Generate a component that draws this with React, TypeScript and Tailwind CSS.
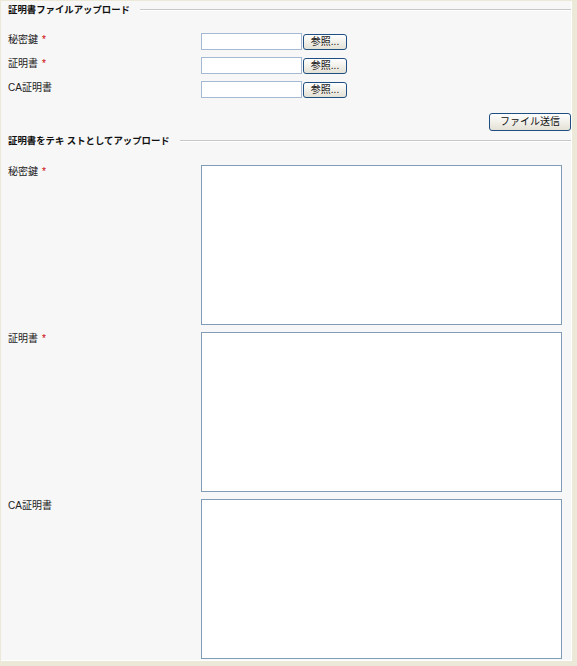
import React from "react";

const font = { fontFamily: '"Liberation Sans", "Noto Sans CJK JP", sans-serif' };

const SectionHeading = ({ title }: { title: string }) => (
  <div className="flex items-center h-[14px]">
    <span className="text-[9.4px] font-bold text-[#111] leading-[14px] whitespace-pre">{title}</span>
    <div className="flex-1 ml-[10px] border-t border-[#c8c8c8] border-b border-b-white h-[2px]" />
  </div>
);

const Label = ({ text, required }: { text: string; required?: boolean }) => (
  <div className="w-[193px] shrink-0 text-[10px] leading-[14px] text-[#222]">
    {text}
    {required && <span className="text-[#cc0000] ml-[4px]">*</span>}
  </div>
);

const FileRow = ({ label, required }: { label: string; required?: boolean }) => (
  <div className="flex items-start h-[24px]">
    <Label text={label} required={required} />
    <input
      type="text"
      className="w-[101px] h-[17px] bg-white border border-[#a5b9d4] outline-none"
    />
    <button className="ml-[1px] mt-[1px] w-[44px] h-[16px] rounded-[3px] border border-[#1f4f82] bg-gradient-to-b from-white to-[#e4e1d5] text-[10px] leading-[14px] text-[#111]">
      参照...
    </button>
  </div>
);

const TextRow = ({ label, required }: { label: string; required?: boolean }) => (
  <div className="flex items-start">
    <Label text={label} required={required} />
    <textarea className="w-[361px] h-[160px] bg-white border border-[#7f9db9] resize-none outline-none" />
  </div>
);

export default function App() {
  return (
    <div className="w-[577px] h-[666px] bg-[#ece9d8] pt-[1px] pl-[1px] pr-[5px] pb-[5px]" style={font}>
      <div className="h-full bg-[#f7f7f7] border-r border-b border-white pl-[7px]">
        <div className="pt-[2px]">
          <SectionHeading title="証明書ファイルアップロード" />
        </div>
        <div className="mt-[16px]">
          <FileRow label="秘密鍵" required />
          <FileRow label="証明書" required />
          <FileRow label="CA証明書" />
        </div>
        <div className="flex justify-end mt-[8px]">
          <button className="w-[82px] h-[18px] rounded-[3px] border border-[#1f4f82] bg-gradient-to-b from-white to-[#e4e1d5] text-[10px] leading-[16px] text-[#111]">
            ファイル送信
          </button>
        </div>
        <div className="mt-[3px]">
          <SectionHeading title="証明書をテキ ストとしてアップロード" />
        </div>
        <div className="mt-[17px] flex flex-col gap-[7px]">
          <TextRow label="秘密鍵" required />
          <TextRow label="証明書" required />
          <TextRow label="CA証明書" />
        </div>
      </div>
    </div>
  );
}
